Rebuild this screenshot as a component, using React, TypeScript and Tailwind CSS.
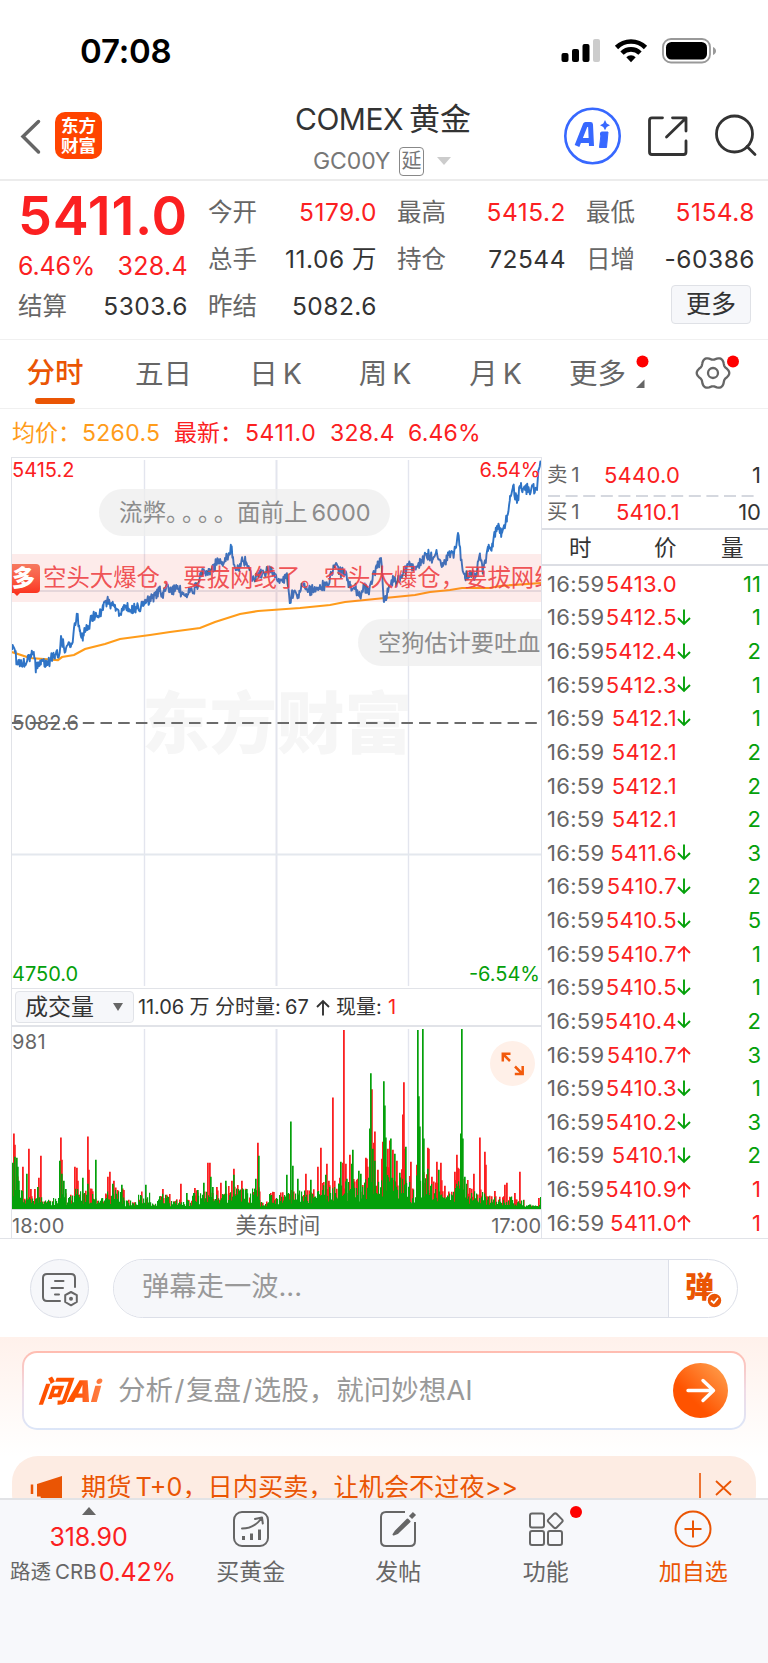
import type { ReactNode } from 'react';

const RED = '#fb2021';
const GREEN = '#04a00a';

// [x, y] in chart pixels, origin at the top left of the price chart
const PRICE: [number, number][] = [
  [0, 190], [3, 192], [5, 204], [9, 200], [13, 204], [17, 198], [21, 193], [24, 208], [29, 202], [34, 206],
  [38, 200], [43, 195], [47, 196], [49, 176], [52, 188], [56, 184], [60, 184], [62, 168], [65, 156], [68, 170],
  [71, 176], [76, 166], [81, 157], [86, 156], [91, 150], [95, 141], [100, 145], [103, 145], [107, 156], [112, 145],
  [118, 151], [124, 147], [131, 146], [138, 139], [143, 135], [148, 129], [151, 138], [155, 125], [160, 130],
  [166, 129], [172, 135], [178, 131], [184, 127], [191, 113], [198, 111], [204, 104], [206, 99], [210, 102],
  [213, 98], [216, 98], [219, 88], [221, 97], [225, 110], [228, 104], [231, 101], [234, 102], [236, 106],
  [240, 121], [246, 113], [252, 113], [258, 111], [264, 115], [270, 120], [275, 118], [278, 139], [282, 131],
  [286, 135], [291, 126], [296, 131], [302, 130], [308, 125], [314, 125], [320, 115], [324, 103], [329, 113],
  [333, 111], [338, 127], [344, 129], [348, 137], [352, 125], [357, 134], [361, 113], [365, 108], [369, 98],
  [372, 142], [376, 132], [381, 118], [385, 122], [391, 114], [398, 106], [403, 109], [408, 103], [415, 94],
  [421, 99], [425, 94], [431, 106], [436, 95], [442, 94], [446, 73], [450, 105], [453, 118], [458, 111],
  [463, 118], [468, 96], [471, 109], [476, 91], [481, 83], [485, 66], [490, 73], [495, 56], [498, 36],
  [501, 26], [505, 43], [509, 23], [511, 29], [523, 29], [525, 30], [527, 9], [529, 4],
];

const AVERAGE =
  'M0 192 L18 198 L46 200 L50 197 L62 195 L73 189 L93 184 L108 179 L138 175 L158 172 L188 168 L203 162 L228 154 L246 151 L288 148 L318 145 L333 142 L373 138 L403 135 L418 132 L438 130 L450 128 L478 128 L488 126 L529 123';

type Spike = [x: number, height: number];

const RED_SPIKES: Spike[] = [
  [1, 75], [2, 64], [10, 42], [16, 60], [18, 20], [22, 20], [28, 53], [26, 31], [48, 71], [49, 49], [62, 42], [64, 41],
  [65, 28], [75, 72], [76, 39], [95, 32], [97, 37], [101, 28], [111, 19], [150, 20], [168, 25], [182, 21],
  [195, 46], [197, 46], [204, 22], [208, 26], [219, 28], [221, 40], [229, 28], [245, 66], [246, 20], [261, 17],
  [293, 35], [305, 42], [308, 61], [314, 45], [316, 28], [320, 111], [330, 46], [331, 178], [333, 45], [337, 54],
  [353, 51], [354, 50], [359, 119], [362, 77], [361, 66], [365, 39], [369, 50], [370, 67], [375, 60], [377, 68], [380, 59],
  [384, 48], [391, 126], [390, 94], [392, 60], [398, 47], [404, 44], [415, 61], [416, 60], [419, 32], [424, 47], [428, 46],
  [432, 23], [442, 37], [444, 54], [445, 41], [446, 40], [448, 37], [457, 21], [461, 35], [467, 71], [472, 57], [473, 44],
  [482, 18], [492, 24], [494, 26], [502, 16], [507, 37], [526, 11],
];

const GREEN_SPIKES: Spike[] = [
  [2, 52], [0, 46], [4, 51], [5, 42], [6, 28], [14, 35], [25, 22], [47, 48], [49, 35], [51, 28], [53, 20], [70, 31], [75, 25],
  [83, 49], [100, 25], [109, 24], [133, 24], [174, 16], [185, 19], [191, 26], [198, 32], [200, 22], [213, 28], [221, 34],
  [234, 20], [243, 30], [246, 53], [274, 34], [278, 87], [280, 43], [285, 30], [298, 29], [313, 34], [328, 47],
  [334, 30], [339, 45], [340, 59], [346, 38], [348, 35], [358, 135], [357, 80], [360, 60], [362, 48], [371, 127], [372, 103],
  [373, 71], [378, 70], [382, 55], [387, 36], [393, 62], [405, 178], [406, 112], [407, 82], [410, 179], [411, 70],
  [415, 40], [426, 39], [448, 75], [449, 179], [450, 70], [452, 32], [528, 12],
];

// upper bound of the ordinary bars along the session
const LEVELS: [until: number, level: number][] = [
  [6, 30], [12, 20], [46, 12], [54, 18], [62, 14], [66, 30], [82, 20], [92, 11], [112, 20], [126, 9], [138, 17],
  [146, 8], [158, 16], [180, 9], [190, 17], [212, 18], [248, 22], [256, 7], [276, 16], [310, 20], [326, 26],
  [352, 30], [392, 40], [398, 30], [404, 22], [416, 36], [432, 28], [442, 19], [456, 30], [474, 19], [500, 13], [512, 9], [529, 4],
];

const TICKS: [price: string, dir: '' | 'up' | 'down', volume: string, sell: boolean][] = [
  ['5413.0', '', '11', true],
  ['5412.5', 'down', '1', true],
  ['5412.4', 'down', '2', true],
  ['5412.3', 'down', '1', true],
  ['5412.1', 'down', '1', true],
  ['5412.1', '', '2', true],
  ['5412.1', '', '2', true],
  ['5412.1', '', '2', true],
  ['5411.6', 'down', '3', true],
  ['5410.7', 'down', '2', true],
  ['5410.5', 'down', '5', true],
  ['5410.7', 'up', '1', true],
  ['5410.5', 'down', '1', true],
  ['5410.4', 'down', '2', true],
  ['5410.7', 'up', '3', true],
  ['5410.3', 'down', '1', true],
  ['5410.2', 'down', '3', true],
  ['5410.1', 'down', '2', true],
  ['5410.9', 'up', '1', false],
  ['5411.0', 'up', '1', false],
];

function createRandom(seed: number) {
  let s = seed;
  return () => {
    s = (s * 16807) % 2147483647;
    return s / 2147483647;
  };
}

function buildPricePath() {
  const rand = createRandom(77);
  const points: string[] = [];
  for (let i = 0; i < PRICE.length - 1; i++) {
    const [x0, y0] = PRICE[i];
    const [x1, y1] = PRICE[i + 1];
    points.push(`${x0} ${y0}`);
    for (let x = x0 + 0.7; x < x1; x += 0.7) {
      const y = y0 + ((y1 - y0) * (x - x0)) / (x1 - x0);
      points.push(`${x.toFixed(1)} ${(y + (rand() - 0.5) * 11).toFixed(1)}`);
    }
  }
  points.push('529 4');
  return 'M' + points.join(' L');
}

function buildBars() {
  const rand = createRandom(4242);
  let red = '';
  let green = '';
  for (let x = 0; x < 529; x++) {
    const level = LEVELS.find(([until]) => x < until)?.[1] ?? 4;
    const g = 1 + level * (0.2 + rand() * 0.7);
    const r = rand() < 0.5 ? level * (0.5 + rand() * 0.6) : 0;
    green += `M${x} 179h1.2v-${g.toFixed(1)}h-1.2z`;
    if (r > g) red += `M${x} 179h1.6v-${r.toFixed(1)}h-1.6z`;
  }
  RED_SPIKES.forEach(([x, h]) => (red += `M${x} 179h1.8v-${h}h-1.8z`));
  GREEN_SPIKES.forEach(([x, h]) => (green += `M${x} 179h1.7v-${h}h-1.7z`));
  return { red, green };
}

// six soft lobes around the centre
function buildGear(cx: number, cy: number) {
  const points: string[] = [];
  for (let i = 0; i < 72; i++) {
    const a = (i * Math.PI) / 36;
    const r = 14.8 + 1.5 * Math.cos(6 * a);
    points.push(`${(cx + r * Math.cos(a)).toFixed(1)} ${(cy + r * Math.sin(a)).toFixed(1)}`);
  }
  return 'M' + points.join(' L') + 'z';
}

const pricePath = buildPricePath();
const bars = buildBars();
const gearPath = buildGear(713, 373);

function StatusBar() {
  return (
    <div className="flex h-[91px] items-start pt-[35px] pl-[80px]">
      <span className="w-[481px] text-[33px] leading-[33px] font-semibold tracking-[-0.2px] text-black">07:08</span>
      <svg width="160" height="30" viewBox="0 0 160 30">
        <rect x="0.500" y="18" width="7" height="9" rx="2" />
        <rect x="11" y="14" width="7" height="13" rx="2" />
        <rect x="21.500" y="9" width="7" height="18" rx="2" />
        <rect x="32" y="4" width="7" height="23" rx="2" fill="#ccc" />
        <g fill="none" stroke="#000" strokeWidth="4.600">
          <path d="M55.500 12.500a20.500 20.500 0 0 1 29 0" />
          <path d="M61 18.200a12.600 12.600 0 0 1 18 0" />
        </g>
        <path d="M65.300 22.300a6.700 6.700 0 0 1 9.400 0L70 27.300z" />
        <rect x="102" y="4" width="47" height="23.500" rx="8" fill="none" stroke="#999" strokeWidth="1.800" />
        <rect x="105" y="7" width="41" height="17.500" rx="5.500" />
        <path d="M152 12c4 1.500 4 6.500 0 8z" fill="#999" />
      </svg>
    </div>
  );
}

function Header() {
  return (
    <header className="flex h-[90px] border-b-2 border-[#ececec]">
      <svg className="mt-[28px] ml-[19px] shrink-0" width="22" height="36" viewBox="0 0 22 36">
        <path d="M19.500 2.500L4 17.500L19.500 33" fill="none" stroke="#666" strokeWidth="3.500" strokeLinecap="round" />
      </svg>
      <div className="mt-[21px] ml-[14px] flex h-[47px] w-[47px] shrink-0 flex-col items-center justify-center rounded-[10px] bg-[#ff4400] text-[17.5px] leading-[20px] font-bold text-white">
        <span>东方</span>
        <span>财富</span>
      </div>
      <div className="ml-[163px] flex w-[238px] shrink-0 flex-col pt-[13px] text-[#333]">
        <h1 className="pl-[30px] text-[30px] leading-[30px] whitespace-nowrap">
          <span className="tracking-[-0.5px]">COMEX</span>
          <span className="ml-[6px] text-[31px]">黄金</span>
        </h1>
        <div className="mt-[12px] ml-[48px] flex h-[30px] items-center text-[#777]">
          <span className="w-[86px] text-[23px] leading-[23px] tracking-[-0.1px]">GC00Y</span>
          <span className="flex h-[29px] w-[25px] items-center justify-center rounded-[4px] border-[1.5px] border-[#888] text-[20px] leading-none">
            延
          </span>
          <svg className="ml-[13px]" width="14" height="8" viewBox="0 0 14 8">
            <path d="M0 0h14L7 8z" fill="#ccc" />
          </svg>
        </div>
      </div>
      <svg className="ml-[60px] shrink-0" width="205" height="88" viewBox="563 91 205 88">
        <circle cx="592.500" cy="136" r="27.200" fill="#fff" stroke="#3768ff" strokeWidth="2.600" />
        <path
          d="M577 146L585.500 124.500H590.500L591.500 146M580.500 140.500H591"
          fill="none"
          stroke="#3768ff"
          strokeWidth="5"
          strokeLinejoin="round"
        />
        <path d="M601.300 132h6.700l-1.500 15.500h-7z" fill="#3768ff" stroke="#3768ff" strokeLinejoin="round" />
        <path d="M600 134h4" stroke="#3768ff" strokeWidth="3" />
        <path d="M605 120l1.700 3.500 3.300 1.700-3.300 1.700-1.700 3.300-1.700-3.300-3.300-1.700 3.300-1.700z" fill="#3768ff" />
        <g fill="none" stroke="#333" strokeWidth="2.800" strokeLinecap="round" strokeLinejoin="round">
          <path d="M662.500 117.800H652q-2.500 0-2.500 2.500V152q0 2.500 2.500 2.500h31.500q2.500 0 2.500-2.500v-11" />
          <path d="M672.500 117.800H686V131M685 119L666.500 137" />
          <circle cx="734.500" cy="134" r="18" />
          <path d="M747 146.500L755 154.500" />
        </g>
      </svg>
    </header>
  );
}

function Cell({ label, value, color = 'text-[#333]' }: { label: string; value: string; color?: string }) {
  return (
    <div className="flex items-center justify-between">
      <span className="text-[24.5px]">{label}</span>
      <span className={`text-[24.5px] tracking-[0.5px] ${color}`}>{value}</span>
    </div>
  );
}

function QuotePanel() {
  const red = 'text-[#fb2021]';
  return (
    <section className="flex h-[159px] gap-[20px] border-b border-[#f0f0f0] pl-[18px] leading-none whitespace-nowrap text-[#666]">
      <div className="w-[170px]">
        <div className="pt-[8px] text-[54px] leading-[54px] font-semibold tracking-[0.8px] text-[#fb2021]">5411.0</div>
        <div className="mt-[10px] flex justify-between text-[25px] leading-[26px] text-[#fb2021]">
          <span className="tracking-[-0.2px]">6.46%</span>
          <span className="tracking-[0.3px]">328.4</span>
        </div>
        <div className="mt-[15px]">
          <Cell label="结算" value="5303.6" />
        </div>
      </div>
      <div className="grid w-[547px] grid-cols-[169px_169px_169px] grid-rows-[47px_47px_47px] gap-x-[20px] pt-[8px]">
        <Cell label="今开" value="5179.0" color={red} />
        <Cell label="最高" value="5415.2" color={red} />
        <Cell label="最低" value="5154.8" color={red} />
        <Cell label="总手" value="11.06 万" />
        <Cell label="持仓" value="72544" />
        <Cell label="日增" value="-60386" />
        <Cell label="昨结" value="5082.6" />
        <div />
        <div className="flex items-start justify-end pt-[2px] pr-[4px]">
          <button className="flex h-[39px] w-[80px] items-center justify-center rounded-[4px] border-[1.5px] border-[#dfe1e6] bg-[#f6f7fa] text-[25px] text-[#333]">
            更多
          </button>
        </div>
      </div>
    </section>
  );
}

function Tabs() {
  return (
    <nav className="flex h-[69px] items-center border-b border-[#f0f0f0] text-[28.5px] leading-none [word-spacing:-3px] text-[#666]">
      <div className="flex h-full w-[110px] flex-col items-center pt-[19px] text-[#ea5504]">
        <span className="font-medium">分时</span>
        <span className="mt-[10px] h-[6px] w-[40px] rounded-full bg-[#ea5504]" />
      </div>
      <span className="w-[107px] text-center">五日</span>
      <span className="w-[117px] text-center">日 K</span>
      <span className="w-[102px] text-center">周 K</span>
      <span className="w-[119px] text-center">月 K</span>
      <span className="ml-[14px] w-[58px]">更多</span>
      <svg width="130" height="69" viewBox="627 340 130 69">
        <circle cx="642.500" cy="361.500" r="6" fill="#fe0000" />
        <path d="M644.500 379.500V388H636z" fill="#666" />
        <path d={gearPath} fill="none" stroke="#666" strokeWidth="2.300" strokeLinejoin="round" />
        <circle cx="713" cy="373" r="5" fill="none" stroke="#666" strokeWidth="2.300" />
        <circle cx="733" cy="361.500" r="6" fill="#fe0000" />
      </svg>
    </nav>
  );
}

function Legend() {
  return (
    <div className="flex h-[48px] items-center pl-[12px] text-[23px] leading-none whitespace-nowrap text-[#fb2021]">
      <span className="w-[70px] text-[#ff9c1a]">均价：</span>
      <span className="w-[92px] tracking-[0.3px] text-[#ff9c1a]">5260.5</span>
      <span className="w-[71px]">最新：</span>
      <span className="w-[85px] tracking-[0.6px]">5411.0</span>
      <span className="w-[78px] tracking-[0.3px]">328.4</span>
      <span className="tracking-[0.2px]">6.46%</span>
    </div>
  );
}

function PriceChart() {
  return (
    <div className="relative h-[530px] overflow-hidden text-[20px] leading-[20px]">
      <div className="absolute top-[226px] left-[130px] text-[67.5px] leading-[80px] font-black text-[#f6f6f6]">东方财富</div>
      <svg className="absolute inset-0" width="529" height="530" viewBox="0 -2 529 530">
        <g fill="none" stroke="#e3e5ee" strokeWidth="1.400">
          <path d="M132.500 0V526M396.500 0V526" />
          <path d="M264.500 0V526" strokeWidth="2" />
          <path d="M0 131H529M0 394.500H529" strokeWidth="2" stroke="#e4e8ee" />
        </g>
        <path d="M0 263H529" stroke="#6b6b6b" strokeWidth="2" strokeDasharray="11.500 6.200" />
        <path d={AVERAGE} fill="none" stroke="#ff9c1a" strokeWidth="2.200" />
        <path d={pricePath} fill="none" stroke="#2f74c6" strokeWidth="1.900" strokeLinejoin="round" />
      </svg>
      <span className="absolute top-[2px] left-0 text-[#fb2021]">5415.2</span>
      <span className="absolute top-[2px] right-[1px] tracking-[-0.3px] text-[#fb2021]">6.54%</span>
      <span className="absolute top-[255px] left-0 text-[#666]">5082.6</span>
      <span className="absolute bottom-[4px] left-0 text-[#04a00a]">4750.0</span>
      <span className="absolute right-[1px] bottom-[4px] text-[#04a00a]">-6.54%</span>

      <div className="absolute top-[31px] left-[87px] flex h-[47px] w-[291px] items-center rounded-full bg-[#eeeeee]/75 pl-[20px] text-[23.5px] whitespace-nowrap text-[#8c8c8c]">
        流弊<span className="w-[71px] tracking-[4.200px]">。。。。</span>面前上<span className="ml-[4px]">6000</span>
      </div>
      <div className="absolute top-[96px] left-0 flex h-[48px] w-full items-center bg-[#f04a40]/11 text-[23.4px] whitespace-nowrap text-[#ee3f43]/90">
        <span className="relative flex h-[29px] w-[28px] shrink-0 items-center justify-center rounded-r-[4px] bg-gradient-to-b from-[#f6795f] to-[#fb3420] pr-[5px] text-[23px] font-black text-white">
          多
          <span className="absolute -bottom-[3px] left-[1px] h-0 w-0 border-x-[4px] border-t-[4px] border-x-transparent border-t-[#fb3420]" />
        </span>
        <span className="ml-[3px] w-[498px] overflow-hidden leading-[40px]">空头大爆仓，要拔网线了。空头大爆仓，要拔网线</span>
      </div>
      <div className="absolute top-[161px] left-[346px] flex h-[47px] w-[183px] items-center rounded-l-full bg-[#eeeeee]/75 pl-[20px] text-[23.2px] whitespace-nowrap text-[#8c8c8c]">
        空狗估计要吐血
      </div>
    </div>
  );
}

function VolumeChart() {
  return (
    <>
      <div className="flex h-[39px] items-center border-t border-b-2 border-[#e1e3e8] pl-[3px] text-[20px] leading-none whitespace-nowrap text-[#333]">
        <button className="flex h-[32px] w-[119px] items-center justify-between rounded-[4px] border-[1.5px] border-[#e1e3e8] bg-[#f6f7fa] pr-[10px] pl-[9px] text-[23px]">
          成交量
          <svg width="10" height="8" viewBox="0 0 10 8">
            <path d="M0 0h10L5 8z" fill="#666" />
          </svg>
        </button>
        <span className="ml-[4px] w-[77px] tracking-[-0.1px]">11.06 万</span>
        <span className="w-[70px]">分时量: </span>
        <span className="w-[31px]">67</span>
        <Arrow dir="up" color="#333" />
        <span className="ml-[6px] w-[52px]">现量: </span>
        <span className="text-[#fb2021]">1</span>
      </div>
      <div className="relative h-[183px] border-b-2 border-[#dcdcdc]">
        <svg className="absolute top-[2px] left-0" width="529" height="180" viewBox="0 0 529 179" preserveAspectRatio="none">
          <path d="M132.500 0V179M396.500 0V179" stroke="#e3e5ee" strokeWidth="1.400" />
          <path d="M264.500 0V179" stroke="#e3e5ee" strokeWidth="2" />
          <path d={bars.red} fill={RED} />
          <path d={bars.green} fill={GREEN} />
        </svg>
        <span className="absolute top-[5px] left-0 text-[20px] leading-[20px] tracking-[0.3px] text-[#666]">981</span>
        <svg className="absolute top-[14px] right-[6px]" width="45" height="45" viewBox="0 0 45 45">
          <circle cx="22.500" cy="22.500" r="22.500" fill="#fff0e8" />
          <path d="M12.800 20.500V12.700H20.500M13 13L20 20M32.700 25V33H24.800M32.500 33L25 25.500" fill="none" stroke="#f25a0c" strokeWidth="2.500" />
        </svg>
      </div>
      <div className="flex h-[28px] items-center justify-between pt-[4px] text-[20px] leading-none text-[#666]">
        <span className="tracking-[0.2px]">18:00</span>
        <span className="text-[21.2px]">美东时间</span>
        <span>17:00</span>
      </div>
    </>
  );
}

function Arrow({ dir, color }: { dir: 'up' | 'down'; color: string }) {
  return (
    <svg width="14" height="17" viewBox="0 0 14 17" className={dir === 'down' ? 'rotate-180' : ''}>
      <path d="M7 16.500V2M1 8L7 2L13 8" fill="none" stroke={color} strokeWidth="1.900" />
    </svg>
  );
}

function OrderRow({ label, price, volume }: { label: string; price: string; volume: string }) {
  return (
    <div className="flex h-[36px] items-center">
      <span className="w-[52px] pl-[5px] text-[20.5px] [word-spacing:-2px] text-[#666]">{label} 1</span>
      <span className="w-[86px] text-right tracking-[0.2px] text-[#fb2021]">{price}</span>
      <span className="flex-1 text-right text-[#333]">{volume}</span>
    </div>
  );
}

function TickList() {
  return (
    <aside className="w-[227px] border-l-[1.5px] border-[#e1e3ea] text-[22px] leading-none whitespace-nowrap">
      <div className="h-[73px] border-b-2 border-[#dcdee4] pr-[7px]">
        <div className="h-[38px]">
          <OrderRow label="卖" price="5440.0" volume="1" />
        </div>
        <svg className="ml-[6px] block" width="208" height="2">
          <path d="M0 1H208" stroke="#d5d8df" strokeWidth="2" strokeDasharray="12 5.600" />
        </svg>
        <div className="-mt-[3px] h-[34px]">
          <OrderRow label="买" price="5410.1" volume="10" />
        </div>
      </div>
      <div className="flex h-[36px] items-center border-b-2 border-[#dcdee4] pt-[3px] text-[22.5px] text-[#333]">
        <span className="w-[85px] pl-[27px]">时</span>
        <span className="w-[67px] pl-[27px]">价</span>
        <span className="pl-[27px]">量</span>
      </div>
      <div className="flex flex-col pt-[1px]">
        {TICKS.map(([price, dir, volume, sell], i) => (
          <div key={i} className="flex h-[33.63px] items-center pr-[7px] pl-[5px]">
            <span className="w-[57px] tracking-[0.3px] text-[#666]">16:59</span>
            <span className="w-[73px] text-right tracking-[0.4px] text-[#fb2021]">{price}</span>
            <span className="w-[14px]">{dir && <Arrow dir={dir} color={dir === 'up' ? RED : GREEN} />}</span>
            <span className={`flex-1 text-right ${sell ? 'text-[#04a00a]' : 'text-[#fb2021]'}`}>{volume}</span>
          </div>
        ))}
      </div>
    </aside>
  );
}

function DanmakuBar() {
  return (
    <div className="flex h-[98px] pt-[20px] pl-[30px]">
      <svg width="59" height="59" viewBox="0 0 59 59">
        <circle cx="29.500" cy="29.500" r="29" fill="#f6f7fa" stroke="#dcdfe8" />
        <g fill="none" stroke="#666" strokeWidth="2" strokeLinecap="round" strokeLinejoin="round">
          <path d="M45 28V19q0-4-4-4H17q-4 0-4 4v19q0 4 4 4h13M25 22h8.500M21.500 29H33M25 35.500h4" />
          <path d="M41 33L46.800 36.200V43L41 46.300L35.200 43V36.200z" />
        </g>
        <circle cx="41" cy="39.700" r="2" fill="#666" />
      </svg>
      <div className="ml-[24px] flex h-[59px] w-[625px] overflow-hidden rounded-full border border-[#dcdfe8] bg-white">
        <div className="flex w-[555px] items-center border-r border-[#dcdfe8] bg-[#f6f7fa] pb-[4px] pl-[28px] text-[27.3px] leading-none text-[#999]">
          弹幕走一波...
        </div>
        <div className="relative flex-1 pt-[13px] pl-[16px] text-[29px] leading-[30px] font-black text-[#ea5504]">
          弹
          <svg className="absolute top-[32px] left-[37px]" width="17" height="17" viewBox="0 0 17 17">
            <circle cx="8.500" cy="8.500" r="7.500" fill="#ea5504" stroke="#fff" strokeWidth="1.500" />
            <path d="M5 8.500L7.800 11L12 6" fill="none" stroke="#fff" strokeWidth="1.800" />
          </svg>
        </div>
      </div>
    </div>
  );
}

function AskAi() {
  return (
    <section className="h-[119px] bg-gradient-to-b from-[#fff1eb] to-white px-[22px] pt-[14px]">
      <div className="h-[79px] rounded-[15px] bg-gradient-to-b from-[#ffbcb0] via-[#efdbe6] to-[#dce6f8] p-[2px]">
        <div className="flex h-full items-center rounded-[13px] bg-white pr-[16px] pl-[15px]">
          <span className="w-[79px] -skew-x-6 bg-gradient-to-r from-[#ff5000] via-[#ff5500] to-[#ff9a60] bg-clip-text text-[30px] leading-[36px] font-black tracking-[-0.5px] text-transparent italic">
            问Ai
          </span>
          <span className="flex-1 text-[27.5px] leading-none whitespace-nowrap text-[#999]">
            分析<span className="mx-[1.500px]">/</span>复盘<span className="mx-[1.500px]">/</span>选股，就问妙想AI
          </span>
          <svg width="55" height="55" viewBox="0 0 55 55">
            <defs>
              <linearGradient id="go" x1="0.200" y1="0.800" x2="0.900" y2="0.100">
                <stop offset="0.200" stopColor="#ff5300" />
                <stop offset="1" stopColor="#ff9a48" />
              </linearGradient>
            </defs>
            <circle cx="27.500" cy="27.500" r="27.500" fill="url(#go)" />
            <path d="M15 27.500H40M30 17.500L40.500 27.500L30 37.500" fill="none" stroke="#fff" strokeWidth="3.400" strokeLinecap="round" strokeLinejoin="round" />
          </svg>
        </div>
      </div>
    </section>
  );
}

function Banner() {
  return (
    <div className="h-[42px] overflow-hidden px-[12px]">
      <div className="flex h-[64px] items-center rounded-[26px] bg-[#fdece3] pl-[18px] text-[25.2px] leading-none [word-spacing:-3px] whitespace-nowrap text-[#ea5504]">
        <svg width="33" height="26" viewBox="0 0 33 26">
          <path d="M2 9.500V19" stroke="#ea5504" strokeWidth="2.500" />
          <path d="M7 9L32 1V25H20v3H12l-1.500-6.500H7z" fill="#ea5504" />
        </svg>
        <span className="ml-[18px] w-[618px]">期货 T+0，日内买卖，让机会不过夜&gt;&gt;</span>
        <svg width="50" height="40" viewBox="0 0 50 40">
          <path d="M1 5V36" stroke="#ea5504" strokeWidth="1.600" />
          <path d="M17 13L32 27M32 13L17 27" stroke="#ea5504" strokeWidth="1.800" />
        </svg>
      </div>
    </div>
  );
}

function NavItem({ icon, label, className = '' }: { icon: ReactNode; label: string; className?: string }) {
  return (
    <div className={`flex w-[147.500px] flex-col items-center pt-[10px] ${className}`}>
      <svg width="60" height="40" viewBox="0 0 60 40" fill="none" stroke="currentColor" strokeWidth="2" strokeLinejoin="round">
        {icon}
      </svg>
      <span className="mt-[11px] text-[23px] leading-[23px]">{label}</span>
    </div>
  );
}

function BottomNav() {
  return (
    <nav className="flex h-[165px] border-t-2 border-[#e2e3e6] bg-[#f7f8fb] text-[#666]">
      <div className="flex w-[177px] flex-col items-center pt-[7px] whitespace-nowrap">
        <svg width="14" height="8" viewBox="0 0 14 8">
          <path d="M0 8h14L7 0z" fill="#666" />
        </svg>
        <span className="mt-[9px] text-[25px] leading-[26px] tracking-[-0.1px] text-[#fb2021]">318.90</span>
        <span className="mt-[9px] flex items-center pl-[9px]">
          <span className="text-[20.5px] leading-[26px]">路透</span>
          <span className="ml-[4px] text-[20.5px] leading-[26px]">CRB</span>
          <span className="ml-[2px] text-[25px] leading-[26px] tracking-[-0.2px] text-[#fb2021]">0.42%</span>
        </span>
      </div>
      <NavItem
        label="买黄金"
        icon={
          <>
            <rect x="13" y="2" width="34" height="34" rx="8" />
            <path d="M21 18.500c8 0 14-3 19-9.500M34 9l7-1.500.800 6" strokeLinecap="round" />
            <path d="M22.500 30V26M30.500 30V23.500M38.500 30V19.500" strokeWidth="3" />
          </>
        }
      />
      <NavItem
        label="发帖"
        icon={
          <>
            <path d="M37 2H18q-5 0-5 5V31q0 5 5 5H42q5 0 5-5V12" />
            <path d="M27.500 21.500L39.500 9.500L41.500 11.500L29.500 23L25.500 24.500z" fill="currentColor" />
            <path d="M42.500 7.500L46.500 3.500" strokeWidth="4.500" />
          </>
        }
      />
      <NavItem
        label="功能"
        icon={
          <>
            <rect x="14" y="3.500" width="14" height="14" rx="2" />
            <rect x="14" y="21" width="14" height="14" rx="2" />
            <rect x="32" y="21" width="14" height="14" rx="2" />
            <rect x="33.500" y="5" width="11.500" height="11.500" rx="2" transform="rotate(45 39.250 10.750)" />
            <circle cx="60" cy="2" r="6" fill="#fe0000" stroke="none" />
          </>
        }
        className="[&>svg]:overflow-visible"
      />
      <NavItem
        label="加自选"
        className="text-[#ea5504]"
        icon={
          <>
            <circle cx="30" cy="19" r="17.500" />
            <path d="M30 10.500V27.500M21.500 19H38.500" />
          </>
        }
      />
    </nav>
  );
}

export default function App() {
  return (
    <main className="h-[1663px] w-[768px] overflow-hidden bg-white font-['Inter','Noto_Sans_CJK_SC',sans-serif]">
      <StatusBar />
      <Header />
      <QuotePanel />
      <Tabs />
      <Legend />
      <div className="flex h-[782px] border-b border-[#e1e3e8] pl-[11px]">
        <div className="w-[530px] shrink-0 border-t border-l border-[#e1e3e8]">
          <PriceChart />
          <VolumeChart />
        </div>
        <TickList />
      </div>
      <DanmakuBar />
      <AskAi />
      <Banner />
      <BottomNav />
    </main>
  );
}
